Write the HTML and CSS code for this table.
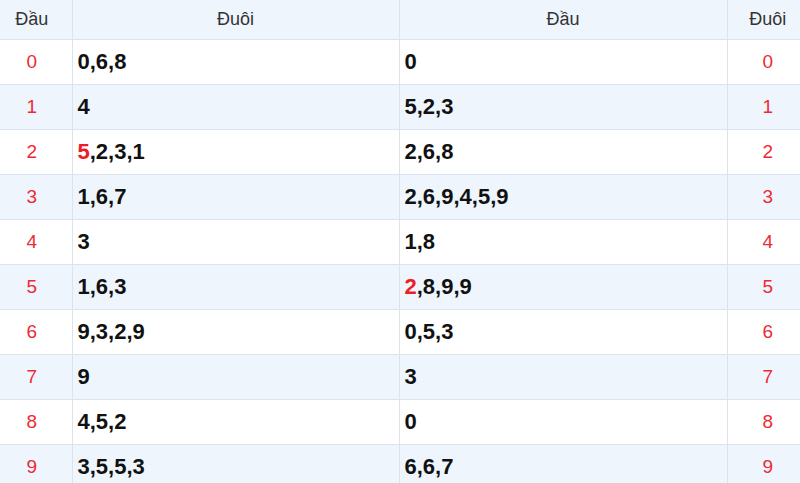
FILE: index.html
```html
<!DOCTYPE html>
<html lang="vi">
<head>
<meta charset="utf-8">
<title>Đầu Đuôi</title>
<link rel="stylesheet" href="styles.css">
</head>
<body>
<table class="loto">
  <colgroup>
    <col class="c-num">
    <col class="c-val">
    <col class="c-val2">
    <col class="c-num2">
  </colgroup>
  <thead>
    <tr><th class="first">Đầu</th><th>Đuôi</th><th>Đầu</th><th class="last">Đuôi</th></tr>
  </thead>
  <tbody>
    <tr><td class="n first">0</td><td class="v">0,6,8</td><td class="v">0</td><td class="n last">0</td></tr>
    <tr><td class="n first">1</td><td class="v">4</td><td class="v">5,2,3</td><td class="n last">1</td></tr>
    <tr><td class="n first">2</td><td class="v"><span class="hl">5</span>,2,3,1</td><td class="v">2,6,8</td><td class="n last">2</td></tr>
    <tr><td class="n first">3</td><td class="v">1,6,7</td><td class="v">2,6,9,4,5,9</td><td class="n last">3</td></tr>
    <tr><td class="n first">4</td><td class="v">3</td><td class="v">1,8</td><td class="n last">4</td></tr>
    <tr><td class="n first">5</td><td class="v">1,6,3</td><td class="v"><span class="hl">2</span>,8,9,9</td><td class="n last">5</td></tr>
    <tr><td class="n first">6</td><td class="v">9,3,2,9</td><td class="v">0,5,3</td><td class="n last">6</td></tr>
    <tr><td class="n first">7</td><td class="v">9</td><td class="v">3</td><td class="n last">7</td></tr>
    <tr><td class="n first">8</td><td class="v">4,5,2</td><td class="v">0</td><td class="n last">8</td></tr>
    <tr><td class="n first">9</td><td class="v">3,5,5,3</td><td class="v">6,6,7</td><td class="n last">9</td></tr>
  </tbody>
</table>
</body>
</html>
```
FILE: styles.css
```css
html, body {
  margin: 0;
  padding: 0;
  background: #ffffff;
}
body {
  font-family: "Liberation Sans", Arial, sans-serif;
  overflow: hidden;
}
.loto {
  width: 800px;
  border-collapse: collapse;
  table-layout: fixed;
}
.c-num { width: 72px; }
.c-val { width: 327px; }
.c-val2 { width: 328px; }
.c-num2 { width: 73px; }
.loto th,
.loto td {
  border: 1px solid #dde3ea;
  padding: 0 5px;
}
.loto .first {
  border-left: none;
  padding: 0 9px 0 1px;
}
.loto .last {
  border-right: none;
  padding: 0 1px 0 9px;
}
.loto thead th { border-top: none; }
.loto th {
  height: 39px;
  background: #eef5fd;
  font-weight: normal;
  font-size: 18px;
  color: #333333;
  text-align: center;
}
.loto td {
  height: 44px;
}
.loto tbody tr:nth-child(even) td {
  background: #eef5fd;
}
.loto td.n {
  text-align: center;
  color: #ee2a33;
  font-size: 19px;
}
.loto td.v {
  text-align: left;
  font-weight: bold;
  font-size: 22px;
  color: #111111;
}
.hl {
  color: #ee1c25;
}
```
